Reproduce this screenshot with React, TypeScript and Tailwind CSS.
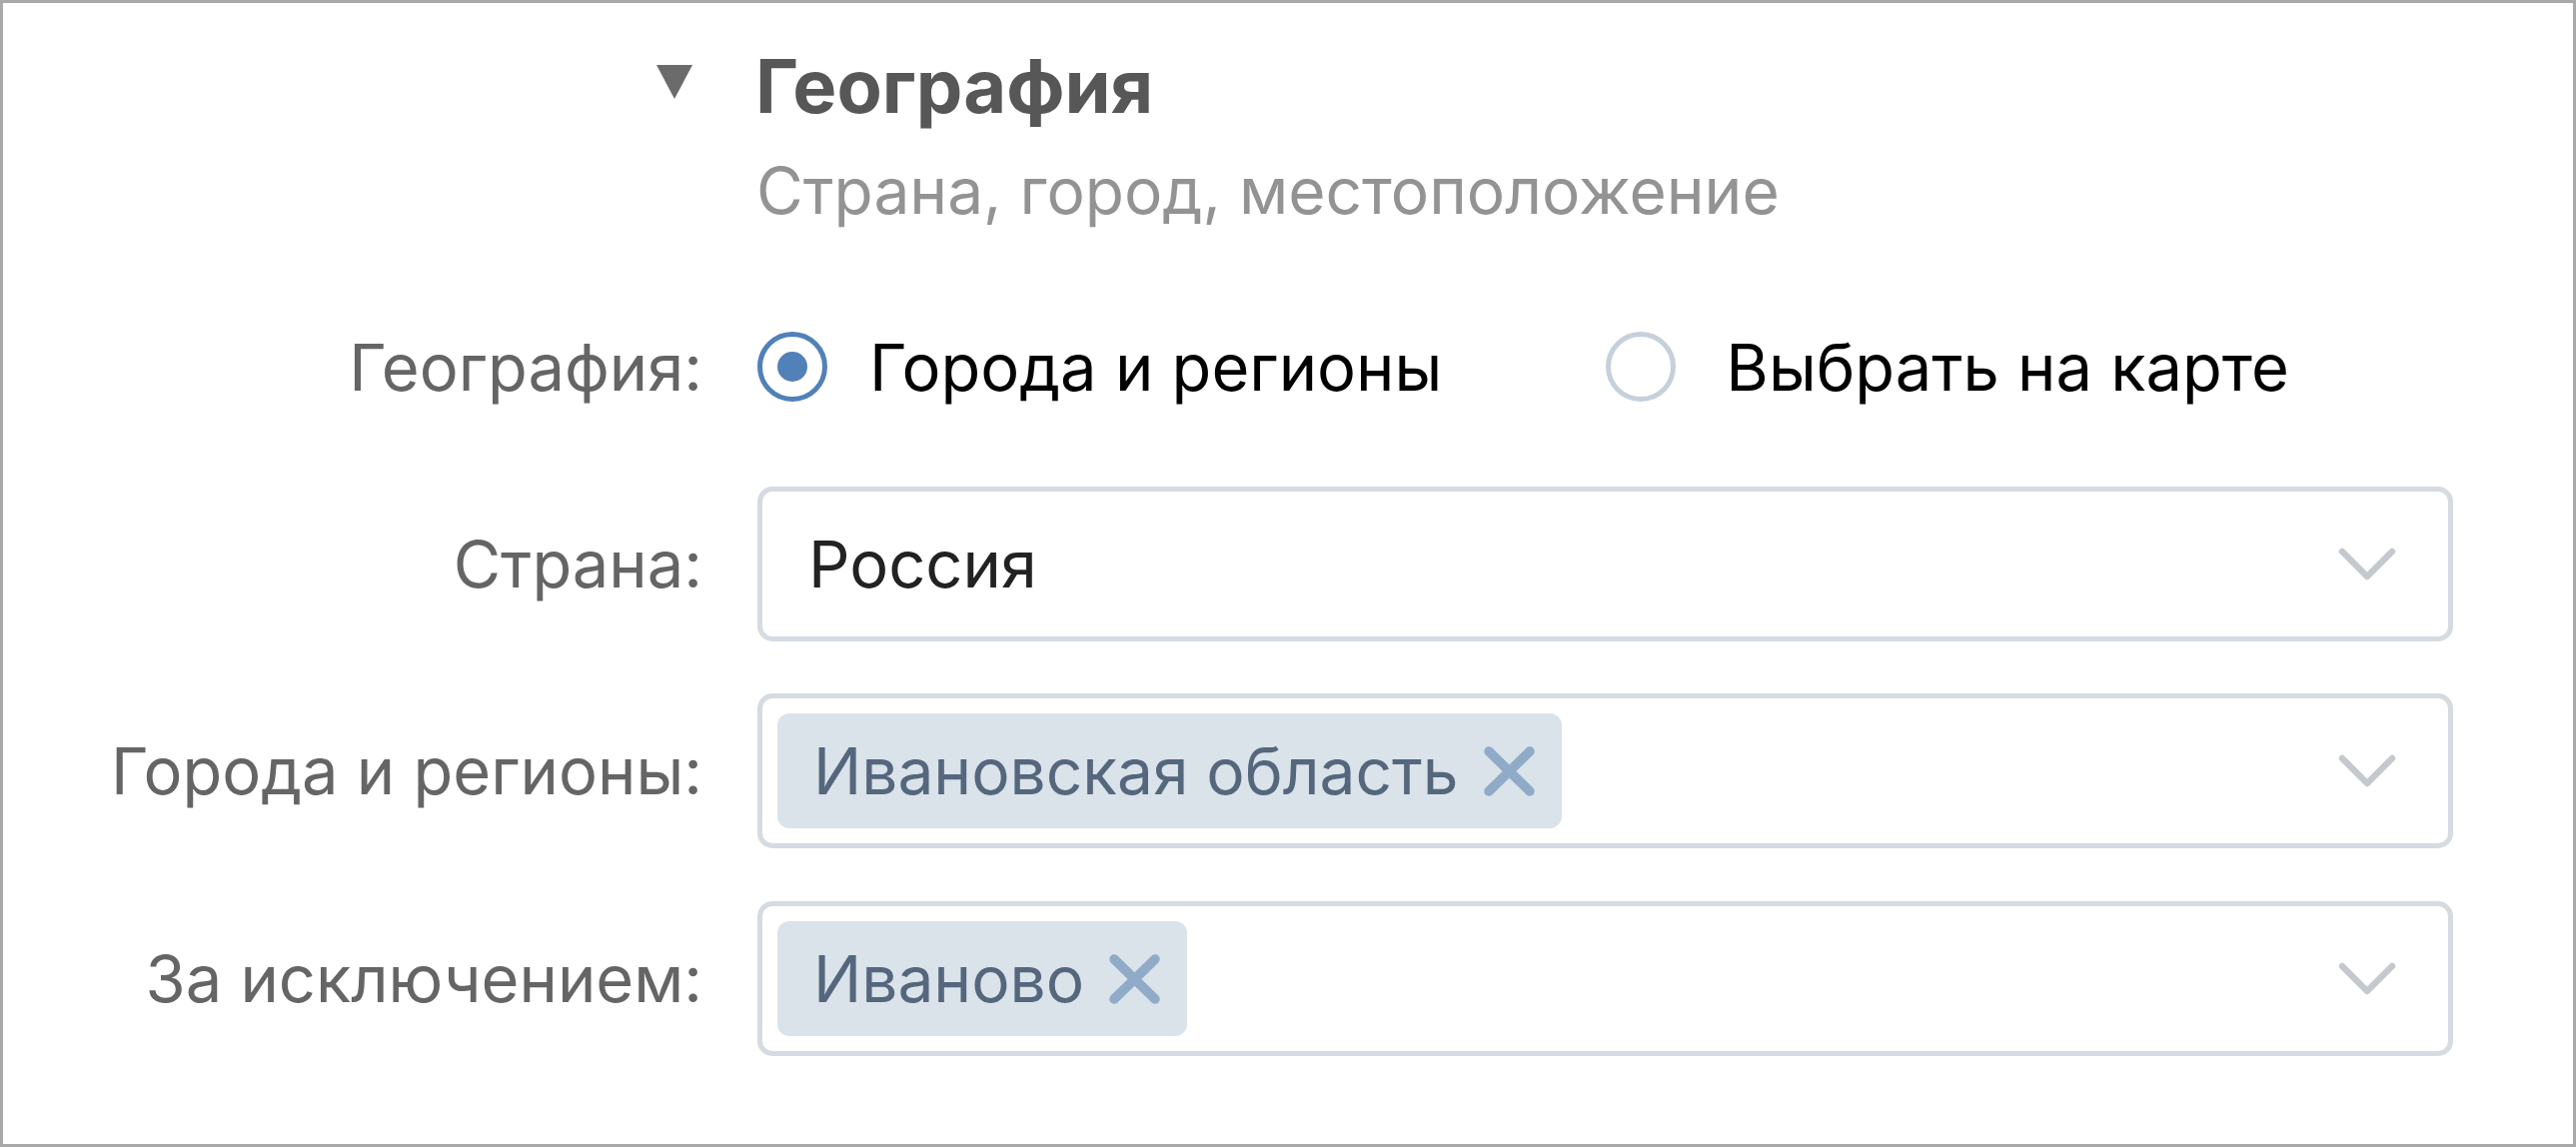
const Chevron = () => (
  <svg width="58" height="36" viewBox="0 0 58 36" fill="none">
    <path d="M4 5 L29 30 L54 5" stroke="#c3c9cf" strokeWidth="6.5" strokeLinecap="round" strokeLinejoin="round" />
  </svg>
);

const Cross = () => (
  <svg width="53" height="52" viewBox="0 0 53 52" fill="none">
    <path d="M6 6 L47 46 M47 6 L6 46" stroke="#8fabc7" strokeWidth="9.5" strokeLinecap="round" />
  </svg>
);

const Chip = ({ text }: { text: string }) => (
  <div className="flex h-[115px] items-center rounded-[12px] bg-[#dae2ea] pl-[36px] pr-[26px]">
    <span className="text-[64px] leading-none text-[#55677d]">{text}</span>
    <span className="ml-[24px] flex">
      <Cross />
    </span>
  </div>
);

const Field = ({ children }: { children: React.ReactNode }) => (
  <div className="flex h-[155px] flex-1 items-center rounded-[15px] border-[5px] border-[#d5dbe1] bg-white pl-[15px] pr-[52px]">
    <div className="flex flex-1 items-center">{children}</div>
    <Chevron />
  </div>
);

const Row = ({ label, mt, children }: { label: string; mt: string; children: React.ReactNode }) => (
  <div className={`flex items-center ${mt}`}>
    <div className="w-[700px] shrink-0 text-right text-[65px] leading-none text-[#656565]">{label}</div>
    <div className="ml-[55px] flex flex-1 items-center">{children}</div>
  </div>
);

export default function App() {
  return (
    <div className="box-border h-[1148px] w-full border-[3px] border-[#a9a9a9] bg-white pr-[120px] pt-[45px] font-['Inter','Liberation_Sans',sans-serif]">
      {/* section header */}
      <div className="flex h-[75px] items-center">
        <div className="flex w-[700px] shrink-0 justify-end pr-[10px]">
          <svg width="36" height="34" viewBox="0 0 36 34" className="-mt-[8px]">
            <polygon points="0,0 36,0 18,34" fill="#6b6b6b" />
          </svg>
        </div>
        <div className="ml-[53px] text-[74px] font-bold leading-none text-[#575757]">География</div>
      </div>
      <div className="ml-[754px] mt-[36px] text-[64px] leading-none text-[#939393]">Страна, город, местоположение</div>

      <div className="mt-[109px] flex h-[70px] items-center">
        <div className="w-[700px] shrink-0 text-right text-[65px] leading-none text-[#656565]">География:</div>
        <div className="ml-[55px] flex items-center">
          <div className="flex h-[70px] w-[70px] items-center justify-center rounded-full border-[5px] border-[#5181b8]">
            <div className="h-[30px] w-[30px] rounded-full bg-[#5181b8]" />
          </div>
          <span className="ml-[42px] text-[65px] leading-none text-black">Города и регионы</span>
          <div className="ml-[164px] h-[70px] w-[70px] rounded-full border-[5px] border-[#c5d0db]" />
          <span className="ml-[50px] text-[65px] leading-none text-black">Выбрать на карте</span>
        </div>
      </div>

      <Row label="Страна:" mt="mt-[85px]">
        <Field>
          <span className="pl-[31px] text-[65px] leading-none text-[#222222]">Россия</span>
        </Field>
      </Row>
      <Row label="Города и регионы:" mt="mt-[52px]">
        <Field>
          <Chip text="Ивановская область" />
        </Field>
      </Row>
      <Row label="За исключением:" mt="mt-[53px]">
        <Field>
          <Chip text="Иваново" />
        </Field>
      </Row>
    </div>
  );
}
